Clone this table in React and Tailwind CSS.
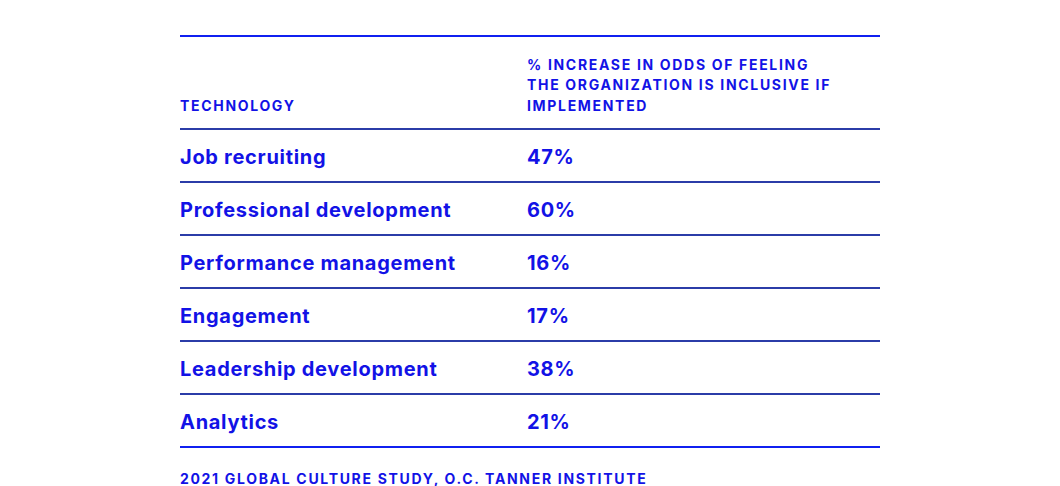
import React from 'react'

const rows = [
  ['Job recruiting', '47%'],
  ['Professional development', '60%'],
  ['Performance management', '16%'],
  ['Engagement', '17%'],
  ['Leadership development', '38%'],
  ['Analytics', '21%'],
]

function App() {
  return (
    <div className="w-[1060px] h-[486px] bg-white font-['Inter',sans-serif] text-[#1212e6]">
      <div className="ml-[180px] w-[700px] pt-[35px]">
        <div className="border-t-2 border-[#1020f0] flex items-end h-[93px] pb-[12px]">
          <div className="w-[347px] text-[14px] font-bold tracking-[0.12em] leading-[20.5px]">TECHNOLOGY</div>
          <div className="text-[14px] font-bold tracking-[0.12em] leading-[20.5px]">
            % INCREASE IN ODDS OF FEELING<br />
            THE ORGANIZATION IS INCLUSIVE IF<br />
            IMPLEMENTED
          </div>
        </div>
        {rows.map(([name, pct]) => (
          <div key={name} className="flex items-center h-[53px] pt-[2px] border-t-2 border-[#2b3ca8]">
            <div className="w-[347px] text-[20px] font-bold tracking-[0.035em]">{name}</div>
            <div className="text-[20px] font-bold tracking-[0.035em]">{pct}</div>
          </div>
        ))}
        <div className="border-t-2 border-[#1020f0] pt-[21px] text-[14px] font-bold tracking-[0.12em] leading-[20px]">
          2021 GLOBAL CULTURE STUDY, O.C. TANNER INSTITUTE
        </div>
      </div>
    </div>
  )
}

export default App
